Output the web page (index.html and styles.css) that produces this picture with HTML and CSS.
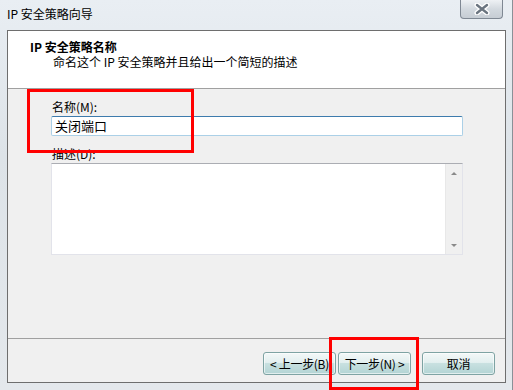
FILE: index.html
```html
<!DOCTYPE html>
<html lang="zh-CN">
<head>
    <meta charset="UTF-8" />
    <title>IP 安全策略向导</title>
    <link rel="stylesheet" href="styles.css">
</head>
<body>

<div class="window">
    <div class="titlebar">
        <span class="title">IP 安全策略向导</span>
        <div class="close-btn">
            <svg width="16" height="12" viewBox="0 0 16 12">
                <path d="M3 2 L13 10 M13 2 L3 10" stroke="#ffffff" stroke-width="5" stroke-linecap="round"/>
                <path d="M3 2 L13 10 M13 2 L3 10" stroke="#6b7580" stroke-width="2.4" stroke-linecap="round"/>
            </svg>
        </div>
    </div>

    <div class="client">
        <div class="header">
            <div class="header-title">IP 安全策略名称</div>
            <div class="header-sub">命名这个 IP 安全策略并且给出一个简短的描述</div>
        </div>

        <div class="content">
            <label class="field-label">名称(M):</label>
            <div class="text-input">关闭端口</div>

            <label class="field-label desc-label">描述(D):</label>
            <div class="text-area">
                <div class="scrollbar">
                    <span class="arrow up"></span>
                    <span class="arrow down"></span>
                </div>
            </div>
        </div>

        <div class="footer">
            <div class="btn">&lt; 上一步(B)</div>
            <div class="btn">下一步(N) &gt;</div>
            <div class="btn cancel">取消</div>
        </div>
    </div>

    <!-- annotation boxes drawn over the dialog -->
    <div class="mark mark-name"></div>
    <div class="mark mark-next"></div>
</div>

</body>
</html>
```

FILE: styles.css
```css
body {
    margin: 0;
    font-family: "Noto Sans CJK SC", "Liberation Sans", sans-serif;
    font-size: 12px;
    color: #000;
}

.window {
    position: relative;
    width: 513px;
    height: 390px;
    box-sizing: border-box;
    background: linear-gradient(to bottom, #e9eef3, #dde3e8 40%, #e4e8ec);
    border-right: 1px solid #8a9097;
    display: flex;
    flex-direction: column;
}

.titlebar {
    height: 30px;
    display: flex;
    justify-content: space-between;
    align-items: flex-start;
}

.title {
    margin: 6px 0 0 7px;
    font-size: 12px;
    line-height: 16px;
}

.close-btn {
    width: 43px;
    height: 19px;
    margin-right: 9px;
    box-sizing: border-box;
    border: 1px solid #7f8893;
    border-top: none;
    border-radius: 0 0 4px 4px;
    background: linear-gradient(to bottom, #eef1f4, #d3d9df 50%, #c6cdd4);
    display: flex;
    justify-content: center;
    align-items: center;
}

.client {
    margin: 0 6px 7px 7px;
    border: 1px solid #6e6e6e;
    background: #f0f0f0;
    height: 353px;
    box-sizing: border-box;
    display: flex;
    flex-direction: column;
}

/* Wizard header */
.header {
    background: #fff;
    height: 58px;
    box-sizing: border-box;
    border-bottom: 1px solid #a0a0a0;
    padding: 8px 0 0 22px;
    line-height: 15px;
}

.header-title {
    font-weight: bold;
}

.header-sub {
    padding-left: 23px;
}

/* Form */
.content {
    height: 250px;
    box-sizing: border-box;
    border-bottom: 1px solid #a0a0a0;
    padding: 11px 0 0 43px;
    display: flex;
    flex-direction: column;
}

.field-label {
    line-height: 14px;
    height: 16px;
    padding-left: 1px;
}

.text-input {
    width: 412px;
    height: 20px;
    box-sizing: border-box;
    background: #fff;
    border: 1px solid #abd0e7;
    border-top-color: #3d7bad;
    border-radius: 2px;
    font-size: 13px;
    line-height: 18px;
    padding-left: 3px;
}

.desc-label {
    margin-top: 11px;
    height: 16px;
}

.text-area {
    width: 412px;
    height: 92px;
    box-sizing: border-box;
    background: #fff;
    border: 1px solid #e2e3ea;
    border-top-color: #abadb3;
    display: flex;
    justify-content: flex-end;
}

.scrollbar {
    width: 16px;
    background: #f0f0f0;
    border-left: 1px solid #e8e8e8;
    display: flex;
    flex-direction: column;
    justify-content: space-between;
    align-items: center;
    padding: 8px 0 7px;
}

.arrow {
    width: 0;
    height: 0;
    border-left: 3px solid transparent;
    border-right: 3px solid transparent;
}

.arrow.up {
    border-bottom: 3px solid #8a8a8a;
}

.arrow.down {
    border-top: 3px solid #8a8a8a;
}

/* Buttons */
.footer {
    flex: 1;
    display: flex;
    justify-content: flex-end;
    align-items: flex-start;
    padding: 13px 10px 0 0;
    gap: 2px;
}

.btn {
    width: 73px;
    height: 23px;
    box-sizing: border-box;
    border: 1px solid #7ea3a3;
    border-radius: 3px;
    background: linear-gradient(to bottom, #f3f8f8, #e3efef 45%, #c8e0e0 50%, #b3d4d4);
    box-shadow: inset 0 0 0 1px rgba(255, 255, 255, 0.6);
    display: flex;
    justify-content: center;
    align-items: center;
    font-size: 12px;
    letter-spacing: -0.3px;
    white-space: nowrap;
}

.btn.cancel {
    margin-left: 9px;
}

/* Red annotation boxes */
.mark {
    position: absolute;
    border: 3px solid #ff0000;
    box-sizing: border-box;
}

.mark-name {
    left: 27px;
    top: 89px;
    width: 167px;
    height: 64px;
}

.mark-next {
    left: 329px;
    top: 337px;
    width: 90px;
    height: 53px;
}
```
